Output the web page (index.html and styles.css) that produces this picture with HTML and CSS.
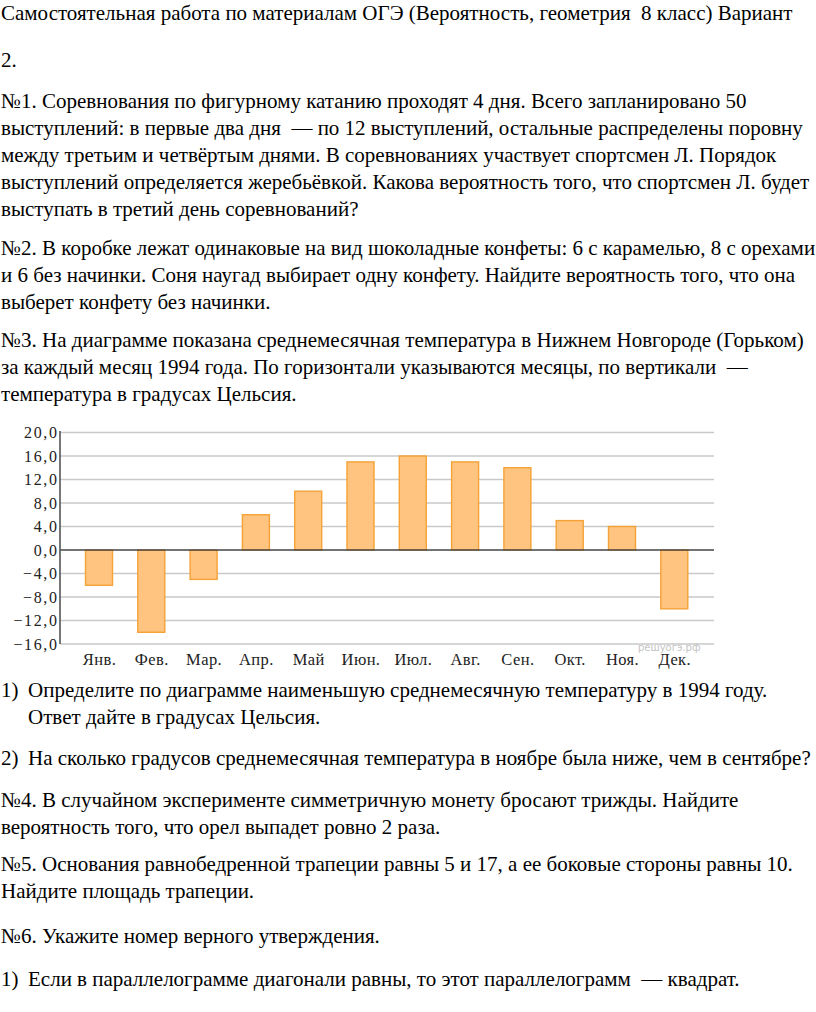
FILE: index.html
```html
<!DOCTYPE html>
<html lang="ru">
<head>
<meta charset="utf-8">
<title>Самостоятельная работа</title>
<link rel="stylesheet" href="styles.css">
</head>
<body>
<main class="page">
  <p class="title">Самостоятельная работа по материалам ОГЭ (Вероятность, геометрия&nbsp; 8 класс) Вариант<br>2.</p>

  <p class="task t1">№1. Соревнования по фигурному катанию проходят 4 дня. Всего запланировано 50<br>выступлений: в первые два дня &nbsp;— по 12 выступлений, остальные распределены поровну<br>между третьим и четвёртым днями. В соревнованиях участвует спортсмен Л. Порядок<br>выступлений определяется жеребьёвкой. Какова вероятность того, что спортсмен Л. будет<br>выступать в третий день соревнований?</p>

  <p class="task t2">№2. В коробке лежат одинаковые на вид шоколадные конфеты: 6 с карамелью, 8 с орехами<br>и 6 без начинки. Соня наугад выбирает одну конфету. Найдите вероятность того, что она<br>выберет конфету без начинки.</p>

  <p class="task t3">№3. На диаграмме показана среднемесячная температура в Нижнем Новгороде (Горьком)<br>за каждый месяц 1994 года. По горизонтали указываются месяцы, по вертикали &nbsp;—<br>температура в градусах Цельсия.</p>

  <svg class="chart" width="720" height="250" viewBox="0 0 720 250" xmlns="http://www.w3.org/2000/svg">
    <g class="grid">
      <line x1="60" y1="12.5" x2="714" y2="12.5"/>
      <line x1="60" y1="36" x2="714" y2="36"/>
      <line x1="60" y1="59.5" x2="714" y2="59.5"/>
      <line x1="60" y1="83" x2="714" y2="83"/>
      <line x1="60" y1="106.5" x2="714" y2="106.5"/>
      <line x1="60" y1="153.5" x2="714" y2="153.5"/>
      <line x1="60" y1="177" x2="714" y2="177"/>
      <line x1="60" y1="200.5" x2="714" y2="200.5"/>
      <line x1="60" y1="224" x2="714" y2="224"/>
    </g>
    <g class="ylabels">
      <text x="58.5" y="18">20,0</text>
      <text x="58.5" y="41.5">16,0</text>
      <text x="58.5" y="65">12,0</text>
      <text x="58.5" y="88.5">8,0</text>
      <text x="58.5" y="112">4,0</text>
      <text x="58.5" y="135.5">0,0</text>
      <text x="58.5" y="159">−4,0</text>
      <text x="58.5" y="182.5">−8,0</text>
      <text x="58.5" y="206">−12,0</text>
      <text x="58.5" y="229.5">−16,0</text>
    </g>
    <g class="bars">
      <rect x="85.5" y="130" width="27" height="35.3"/>
      <rect x="137.8" y="130" width="27" height="82.3"/>
      <rect x="190.1" y="130" width="27" height="29.4"/>
      <rect x="242.4" y="94.7" width="27" height="35.3"/>
      <rect x="294.7" y="71.2" width="27" height="58.8"/>
      <rect x="347" y="41.9" width="27" height="88.1"/>
      <rect x="399.3" y="36" width="27" height="94"/>
      <rect x="451.6" y="41.9" width="27" height="88.1"/>
      <rect x="503.9" y="47.7" width="27" height="82.3"/>
      <rect x="556.2" y="100.6" width="27" height="29.4"/>
      <rect x="608.5" y="106.5" width="27" height="23.5"/>
      <rect x="660.8" y="130" width="27" height="58.8"/>
    </g>
    <line class="zero" x1="60" y1="130" x2="714" y2="130"/>
    <line class="axis" x1="60" y1="11" x2="60" y2="224"/>
    <text class="wm" x="638" y="231">решуогэ.рф</text>
    <g class="months">
      <text x="99.5" y="244.5">Янв.</text>
      <text x="151.8" y="244.5">Фев.</text>
      <text x="204.1" y="244.5">Мар.</text>
      <text x="256.4" y="244.5">Апр.</text>
      <text x="308.7" y="244.5">Май</text>
      <text x="361" y="244.5">Июн.</text>
      <text x="413.3" y="244.5">Июл.</text>
      <text x="465.6" y="244.5">Авг.</text>
      <text x="517.9" y="244.5">Сен.</text>
      <text x="570.2" y="244.5">Окт.</text>
      <text x="622.5" y="244.5">Ноя.</text>
      <text x="674.8" y="244.5">Дек.</text>
    </g>
  </svg>

  <div class="item q1"><span class="num">1)</span><span class="body">Определите по диаграмме наименьшую среднемесячную температуру в 1994 году.<br>Ответ дайте в градусах Цельсия.</span></div>
  <div class="item q2"><span class="num">2)</span><span class="body">На сколько градусов среднемесячная температура в ноябре была ниже, чем в сентябре?</span></div>

  <p class="task t4">№4. В случайном эксперименте симметричную монету бросают трижды. Найдите<br>вероятность того, что орел выпадет ровно 2 раза.</p>

  <p class="task t5">№5. Основания равнобедренной трапеции равны 5 и 17, а ее боковые стороны равны 10.<br>Найдите площадь трапеции.</p>

  <p class="task t6">№6. Укажите номер верного утверждения.</p>

  <div class="item q6"><span class="num">1)</span><span class="body">Если в параллелограмме диагонали равны, то этот параллелограмм &nbsp;— квадрат.</span></div>
</main>
</body>
</html>
```

FILE: styles.css
```css
html, body {
  margin: 0;
  padding: 0;
  background: #ffffff;
}

body {
  font-family: "Liberation Serif", serif;
  font-size: 21px;
  color: #000000;
}

.page {
  width: 816px;
  padding-left: 1px;
  box-sizing: border-box;
  overflow: hidden;
}

p {
  margin: 0;
}

.title {
  line-height: 47px;
  margin-top: -10.5px;
  white-space: nowrap;
}

.task {
  line-height: 27px;
  white-space: nowrap;
}

.t1 { margin-top: 4px; }
.t2 { margin-top: 12px; }
.t3 { margin-top: 11px; }
.t4 { margin-top: 15px; }
.t5 { margin-top: 10px; }
.t6 { margin-top: 18px; }

.chart {
  display: block;
  margin-top: 12.5px;
  margin-left: -1px;
}

.grid line {
  stroke: #c9c9c9;
  stroke-width: 1.3;
}

.zero {
  stroke: #444444;
  stroke-width: 1.4;
}

.axis {
  stroke: #555555;
  stroke-width: 1.6;
}

.bars rect {
  fill: #ffc47f;
  stroke: #f5a236;
  stroke-width: 1.4;
}

.ylabels text {
  font-family: "Liberation Serif", serif;
  font-size: 16px;
  letter-spacing: 1.6px;
  text-anchor: end;
  fill: #222222;
}

.months text {
  font-family: "Liberation Serif", serif;
  font-size: 16.5px;
  letter-spacing: 0.4px;
  text-anchor: middle;
  fill: #222222;
}

.wm {
  font-family: "DejaVu Sans", sans-serif;
  font-size: 10px;
  fill: #c4c4c4;
}

.item {
  display: flex;
  line-height: 27px;
  white-space: nowrap;
}

.item .num {
  flex: 0 0 27px;
}

.q1 { margin-top: 6.5px; }
.q2 { margin-top: 14px; }
.q6 { margin-top: 16px; }
```
